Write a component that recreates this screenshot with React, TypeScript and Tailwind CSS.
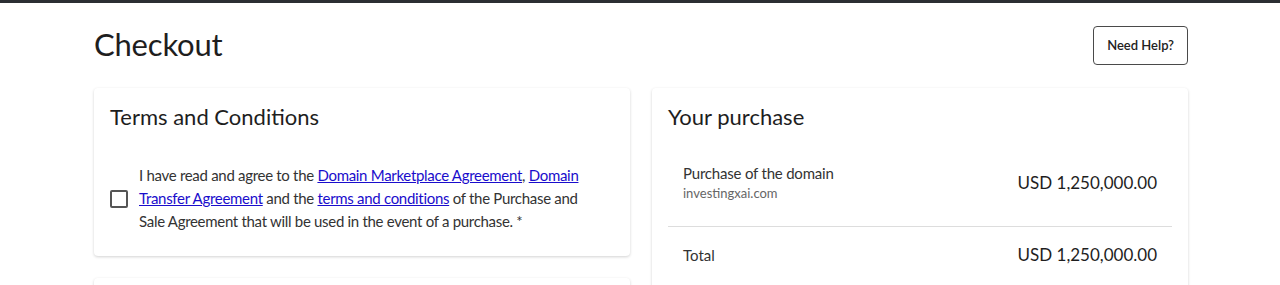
const font = { fontFamily: "Lato, 'Liberation Sans', sans-serif" }

function Card({ children, className = '' }: { children: React.ReactNode; className?: string }) {
  return (
    <div className={`bg-white rounded-[4px] shadow-[0_1px_3px_rgba(0,0,0,0.18)] ${className}`}>
      {children}
    </div>
  )
}

export default function App() {
  return (
    <div className="h-[285px] overflow-hidden bg-white text-[#222]" style={font}>
      <div className="h-[3px] bg-[#2b2f33]" />
      <div className="w-[1094px] ml-[94px]">
        <div className="flex items-start justify-between h-[85px]">
          <h1 className="mt-[22px] text-[31px] leading-[38px] text-[#1e1e1e] font-normal tracking-[-0.2px]">Checkout</h1>
          <button className="mt-[23px] h-[39px] px-[13px] border border-[#4a4a4a] rounded-[4px] text-[13px] font-semibold text-[#222] bg-white">
            Need Help?
          </button>
        </div>

        <div className="grid grid-cols-2 gap-[22px]">
          <div className="flex flex-col gap-[22px]">
            <Card className="px-4 pt-[14px] pb-[23px]">
              <h2 className="text-[22px] leading-[30px] text-[#1e1e1e]">Terms and Conditions</h2>
              <div className="flex items-center gap-[11px] mt-[32px]">
                <span className="w-[18px] h-[18px] shrink-0 border-2 border-[#555] rounded-[2px]" />
                <p className="max-w-[445px] text-[15px] leading-[23px] tracking-[-0.3px] text-[#333]">
                  I have read and agree to the{' '}
                  <a className="text-[#1a0dcc] underline" href="#">Domain Marketplace Agreement</a>,{' '}
                  <a className="text-[#1a0dcc] underline" href="#">Domain Transfer Agreement</a> and the{' '}
                  <a className="text-[#1a0dcc] underline" href="#">terms and conditions</a> of the Purchase and Sale
                  Agreement that will be used in the event of a purchase. *
                </p>
              </div>
            </Card>
            <Card className="h-[60px]" />
          </div>

          <Card className="px-4 pt-[14px] pb-4">
            <h2 className="text-[22px] leading-[30px] text-[#1e1e1e]">Your purchase</h2>
            <div className="flex items-center justify-between px-[15px] pt-[31px] pb-[23px] border-b border-[#ddd]">
              <div>
                <div className="text-[15px] leading-[20px] tracking-[-0.2px] text-[#333]">Purchase of the domain</div>
                <div className="text-[13px] leading-[20px] text-[#666]">investingxai.com</div>
              </div>
              <div className="text-[17px] text-[#1e1e1e]">USD 1,250,000.00</div>
            </div>
            <div className="flex items-center justify-between px-[15px] pt-[15px]">
              <div className="text-[15px] text-[#333]">Total</div>
              <div className="text-[17px] text-[#1e1e1e]">USD 1,250,000.00</div>
            </div>
          </Card>
        </div>
      </div>
    </div>
  )
}
